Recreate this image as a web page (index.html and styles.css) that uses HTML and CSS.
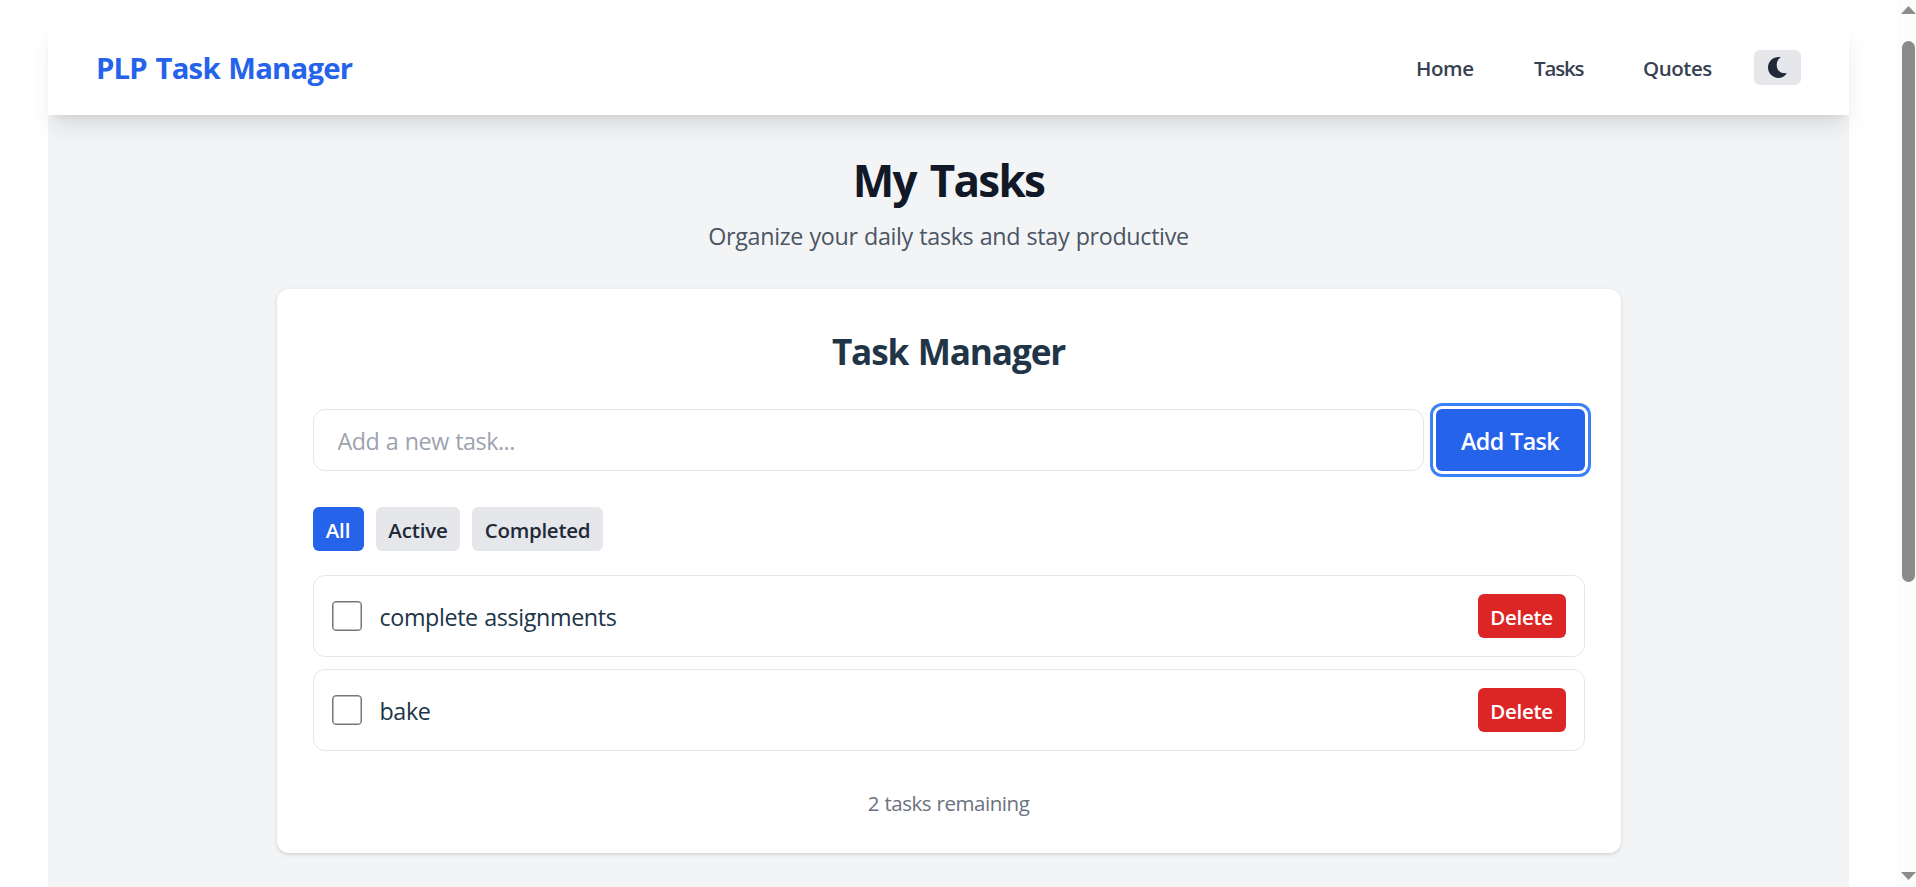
FILE: index.html
```html
<!DOCTYPE html>
<html lang="en">
<head>
<meta charset="utf-8">
<title>PLP Task Manager</title>
<link rel="stylesheet" href="styles.css">
</head>
<body>
<div class="viewport">
  <div class="app">
    <header class="navbar">
      <a class="brand">PLP Task Manager</a>
      <nav class="nav">
        <a class="nav-link nav-home">Home</a>
        <a class="nav-link nav-tasks">Tasks</a>
        <a class="nav-link nav-quotes">Quotes</a>
        <button class="theme-toggle" aria-label="Toggle theme">
          <svg class="moon" viewBox="0 0 19 21"><path d="M12.7.2C9.400 2.400 8.200 6.200 8.900 9.900C9.700 14.200 13.200 16.800 18.900 16.300C17 19.400 13.800 21 10.400 21C4.500 21 0 16.300 0 10.600C0 4.400 5.100-.6 12.700.2Z"/></svg>
        </button>
      </nav>
    </header>
    <main class="content">
      <h1 class="title">My Tasks</h1>
      <p class="subtitle">Organize your daily tasks and stay productive</p>
      <section class="card">
        <h2 class="card-title">Task Manager</h2>
        <form class="add-form">
          <input class="task-input" type="text" placeholder="Add a new task...">
          <button class="add-button" type="button">Add Task</button>
        </form>
        <div class="filters">
          <button class="filter filter-all active">All</button>
          <button class="filter filter-active">Active</button>
          <button class="filter filter-completed">Completed</button>
        </div>
        <ul class="tasks">
          <li class="task">
            <input class="check" type="checkbox">
            <span class="task-name">complete assignments</span>
            <button class="delete">Delete</button>
          </li>
          <li class="task">
            <input class="check" type="checkbox">
            <span class="task-name">bake</span>
            <button class="delete">Delete</button>
          </li>
        </ul>
        <p class="remaining">2 tasks remaining</p>
      </section>
    </main>
  </div>
  <div class="scrollbar">
    <svg class="arrow" viewBox="0 0 15 8"><path d="M7.500 0L15 8H0Z"/></svg>
    <div class="thumb"></div>
    <svg class="arrow arrow-down" viewBox="0 0 15 8"><path d="M0 0H15L7.500 8Z"/></svg>
  </div>
</div>
</body>
</html>
```

FILE: styles.css
```css
* { box-sizing: border-box; }
body {
  margin: 0;
  background: #fff;
  color: #1f2937;
  font-family: "Open Sans", "Noto Sans", sans-serif;
  overflow: hidden;
}
h1, h2, p, ul { margin: 0; padding: 0; }
button, input { font-family: inherit; margin: 0; }
button { border: 0; }

.viewport { display: flex; height: 887px; }
.app { flex: 1; padding: 20px 48px 0; display: flex; flex-direction: column; }

.navbar {
  position: relative;
  display: flex;
  align-items: center;
  justify-content: space-between;
  height: 95px;
  padding: 0 48px;
  background: #fff;
  box-shadow: 0 15px 22.5px -4.5px rgba(0, 0, 0, .1), 0 6px 9px -6px rgba(0, 0, 0, .1);
}
.brand { font-size: 29.3px; font-weight: 700; line-height: 42px; letter-spacing: -.8px; word-spacing: 1.8px; color: #2563eb; }
.nav { display: flex; align-items: center; }
.nav-link { font-size: 20.5px; font-weight: 600; line-height: 30px; color: #374151; padding-top: 1px; }
.nav-home { width: 118px; letter-spacing: -.4px; }
.nav-tasks { width: 109px; letter-spacing: -1.15px; }
.nav-quotes { width: 111px; letter-spacing: -.45px; }
.theme-toggle {
  display: flex;
  align-items: center;
  justify-content: center;
  width: 47px;
  height: 35px;
  border-radius: 6px;
  background: #e5e7eb;
}
.moon { width: 19px; height: 21px; fill: #1f2937; }

.content { flex: 1; display: flex; flex-direction: column; align-items: center; background: #f3f4f6; padding-top: 36px; }
.title { font-size: 44px; font-weight: 700; line-height: 58px; letter-spacing: -1.7px; word-spacing: 4px; color: #111827; }
.subtitle { margin-top: 9px; font-size: 23.3px; line-height: 36px; letter-spacing: -.34px; word-spacing: .7px; color: #4b5563; }

.card {
  width: 1344px;
  height: 564px;
  margin-top: 35px;
  padding: 36px;
  border-radius: 12px;
  background: #fff;
  box-shadow: 0 1.5px 4.5px rgba(0, 0, 0, .1), 0 1.5px 3px -1.5px rgba(0, 0, 0, .1);
}
.card-title { padding-top: 1px; font-size: 35.2px; font-weight: 700; line-height: 50px; letter-spacing: -1.15px; word-spacing: 1.5px; text-align: center; color: #213547; }
.add-form { display: flex; gap: 12px; margin-top: 33px; }
.task-input {
  flex: 1;
  height: 62px;
  padding: 2px 24px 0;
  border: 1px solid #e5e7eb;
  border-radius: 12px;
  background: #fff;
  font-size: 23.3px;
  letter-spacing: -.45px;
  word-spacing: .8px;
  outline: 0;
}
.task-input::placeholder { color: #9ca3af; opacity: 1; }
.add-button {
  width: 149px;
  height: 62px;
  padding: 2px 0 0;
  border-radius: 6px;
  background: #2563eb;
  color: #fff;
  font-size: 23.3px;
  font-weight: 600;
  letter-spacing: -.65px;
  word-spacing: 1.2px;
  box-shadow: 0 0 0 3px #fff, 0 0 0 6px #3b82f6;
}
.filters { display: flex; gap: 12px; margin-top: 36px; }
.filter {
  height: 44px;
  padding: 2px 0 0 1px;
  border-radius: 6px;
  background: #e5e7eb;
  color: #1f2937;
  font-size: 20.5px;
  font-weight: 600;
  letter-spacing: -.15px;
}
.filter-all { width: 51px; padding-left: 0; }
.filter-active { width: 84px; }
.filter-completed { width: 131px; letter-spacing: -.3px; }
.filter.active { background: #2563eb; color: #fff; }

.tasks { display: flex; flex-direction: column; gap: 12px; margin-top: 24px; list-style: none; }
.task {
  display: flex;
  align-items: center;
  height: 82px;
  padding: 0 18px;
  border: 1px solid #e5e7eb;
  border-radius: 12px;
}
.check {
  appearance: none;
  width: 30px;
  height: 30px;
  border: 1px solid #767676;
  border-radius: 4px;
  background: #fff;
  box-shadow: inset 0 0 0 .5px #767676;
}
.task-name { flex: 1; padding: 2px 0 0 18px; font-size: 23.3px; line-height: 36px; letter-spacing: -.38px; word-spacing: .8px; color: #213547; }
.delete {
  width: 88px;
  height: 44px;
  padding: 2px 0 0;
  border-radius: 6px;
  background: #dc2626;
  color: #fff;
  font-size: 20.5px;
  font-weight: 600;
  letter-spacing: -.3px;
}
.remaining { margin-top: 37px; font-size: 20.5px; line-height: 30px; letter-spacing: -.46px; word-spacing: .6px; text-align: center; color: #6b7280; }

.scrollbar {
  display: flex;
  flex-direction: column;
  align-items: flex-end;
  width: 19px;
  padding: 6px 0 7px;
  background: #fcfcfc;
}
.arrow { width: 15px; height: 8px; fill: #8b8b8b; }
.arrow-down { margin-top: auto; }
.thumb { width: 13px; height: 541px; margin: 27px 1px 0 0; border-radius: 7px; background: #8b8b8b; }
```
